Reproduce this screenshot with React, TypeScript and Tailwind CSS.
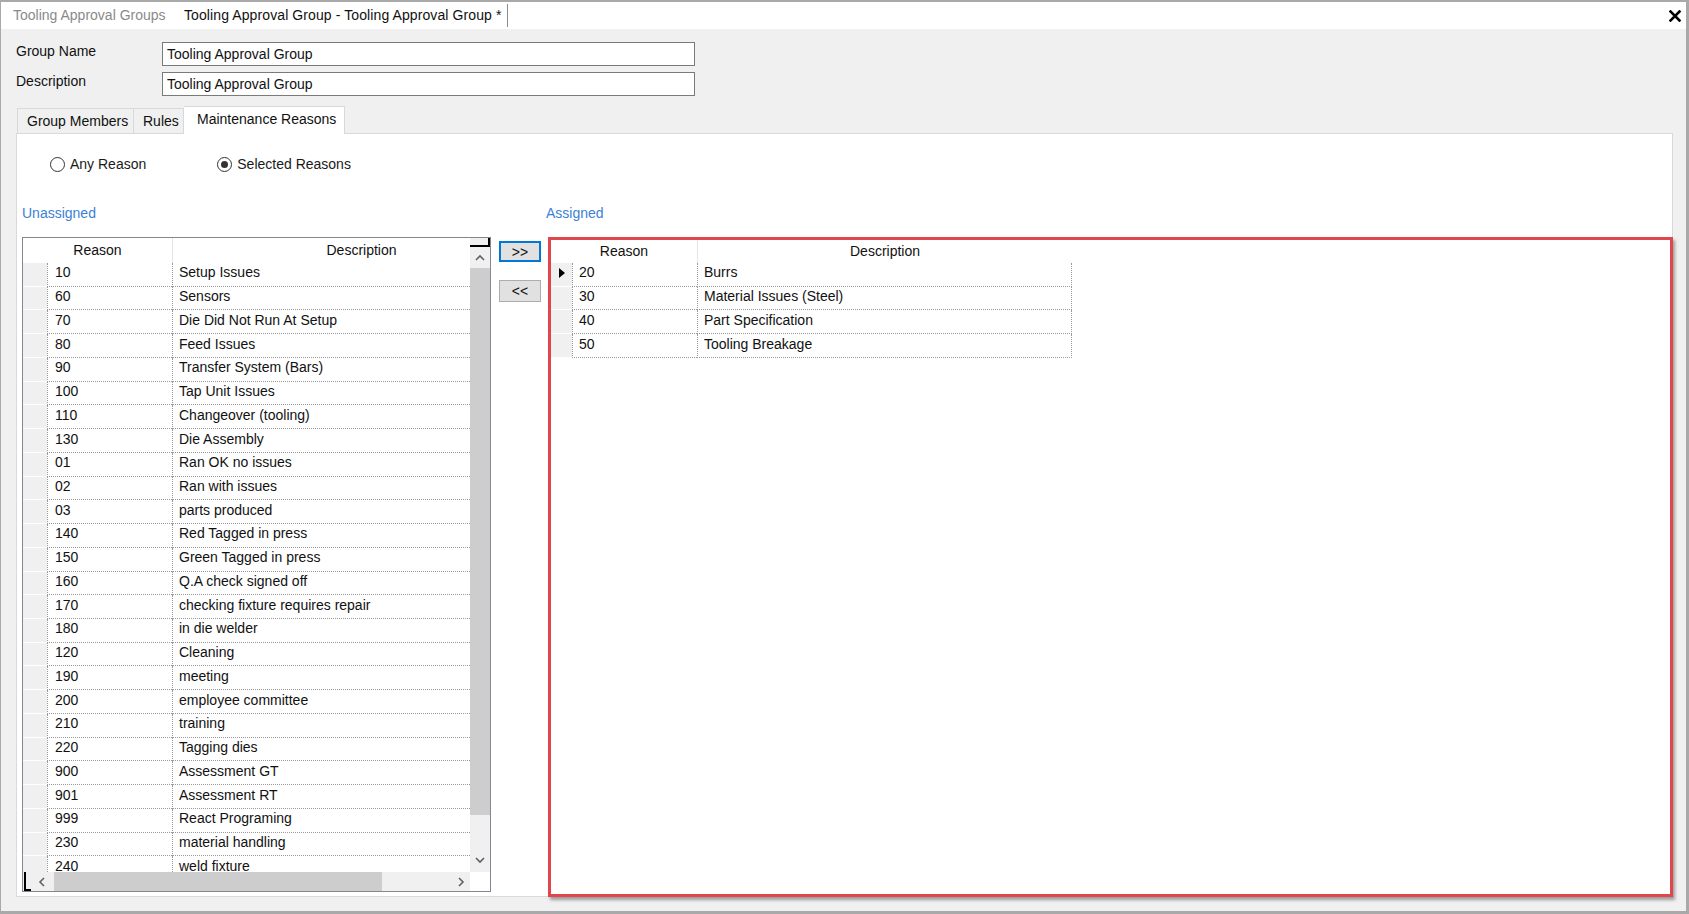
import React from "react";

const unassigned: [string, string][] = [
  ["10", "Setup Issues"],
  ["60", "Sensors"],
  ["70", "Die Did Not Run At Setup"],
  ["80", "Feed Issues"],
  ["90", "Transfer System (Bars)"],
  ["100", "Tap Unit Issues"],
  ["110", "Changeover (tooling)"],
  ["130", "Die Assembly"],
  ["01", "Ran OK no issues"],
  ["02", "Ran with issues"],
  ["03", "parts produced"],
  ["140", "Red Tagged in press"],
  ["150", "Green Tagged in press"],
  ["160", "Q.A check signed off"],
  ["170", "checking fixture requires repair"],
  ["180", "in die welder"],
  ["120", "Cleaning"],
  ["190", "meeting"],
  ["200", "employee committee"],
  ["210", "training"],
  ["220", "Tagging dies"],
  ["900", "Assessment GT"],
  ["901", "Assessment RT"],
  ["999", "React Programing"],
  ["230", "material handling"],
  ["240", "weld fixture"],
];

const assigned: [string, string][] = [
  ["20", "Burrs"],
  ["30", "Material Issues (Steel)"],
  ["40", "Part Specification"],
  ["50", "Tooling Breakage"],
];

function Chevron({ dir }: { dir: "up" | "down" | "left" | "right" }) {
  const d =
    dir === "up"
      ? "M1 7 L5 3 L9 7"
      : dir === "down"
      ? "M1 3 L5 7 L9 3"
      : dir === "left"
      ? "M7 1 L3 5 L7 9"
      : "M3 1 L7 5 L3 9";
  return (
    <svg width="10" height="10" viewBox="0 0 10 10">
      <path d={d} fill="none" stroke="#606060" strokeWidth="1.6" />
    </svg>
  );
}

function Radio({ checked, label }: { checked: boolean; label: string }) {
  return (
    <div className="flex items-center gap-[5px]">
      <div className="w-[15px] h-[15px] rounded-full border border-[#333333] bg-white flex items-center justify-center">
        {checked && <div className="w-[7px] h-[7px] rounded-full bg-[#333333]" />}
      </div>
      <span className="text-[#1a1a1a]">{label}</span>
    </div>
  );
}

export default function App() {
  return (
    <div className="w-[1689px] h-[914px] bg-[#f0f0f0] border-t-2 border-l border-r-[3px] border-b-[3px] border-[#a9a9a9] flex flex-col font-['Liberation_Sans',Arial,sans-serif] text-[14px] text-[#111] overflow-hidden">
      {/* document tabs */}
      <div className="h-[27px] bg-white flex items-center shrink-0">
        <div className="pl-[12px] w-[183px] text-[#8a8a8a] leading-[27px] whitespace-nowrap">Tooling Approval Groups</div>
        <div className="w-[323px] leading-[27px] whitespace-nowrap tracking-[0.1px]">Tooling Approval Group - Tooling Approval Group *</div>
        <div className="w-px h-[23px] bg-[#8c8c8c]" />
        <div className="flex-1" />
        <div className="mr-[5px]">
          <svg width="12" height="12" viewBox="0 0 12 12">
            <path d="M1.5 1.5 L10.5 10.5 M10.5 1.5 L1.5 10.5" stroke="#000" strokeWidth="2.6" strokeLinecap="square" />
          </svg>
        </div>
      </div>

      {/* form fields */}
      <div className="mt-[13px] ml-[15px] grid grid-cols-[146px_533px] gap-y-[6px] shrink-0">
        <div className="h-[24px] leading-[18px]">Group Name</div>
        <div className="h-[24px] border border-[#7a7a7a] bg-white px-[4px] leading-[22px]">Tooling Approval Group</div>
        <div className="h-[24px] leading-[18px]">Description</div>
        <div className="h-[24px] border border-[#7a7a7a] bg-white px-[4px] leading-[22px]">Tooling Approval Group</div>
      </div>

      {/* tab control */}
      <div className="mt-[10px] ml-[15px] mr-[13px] flex flex-col flex-1 min-h-0 mb-[14px]">
        <div className="flex items-end h-[27px] pl-[1px] relative z-10 shrink-0">
          <div className="w-[117px] h-[25px] border border-b-0 border-[#d9d9d9] bg-[#f0f0f0] flex items-center pl-[9px] pt-[1px]">Group Members</div>
          <div className="w-[50px] h-[25px] border border-b-0 border-l-0 border-[#d9d9d9] bg-[#f0f0f0] flex items-center pl-[9px] pt-[1px]">Rules</div>
          <div className="w-[161px] h-[28px] -mb-px border border-b-0 border-l-0 border-[#d9d9d9] bg-white flex items-center pl-[13px] pb-[2px]">Maintenance Reasons</div>
        </div>
        <div className="flex-1 min-h-0 border border-[#d9d9d9] bg-white flex flex-col">
          <div className="mt-[20px] h-[20px] flex items-center shrink-0">
            <div className="ml-[33px]">
              <Radio checked={false} label="Any Reason" />
            </div>
            <div className="ml-[71px]">
              <Radio checked={true} label="Selected Reasons" />
            </div>
          </div>

          <div className="mt-[30px] flex flex-1 min-h-0">
            {/* Unassigned */}
            <div className="ml-[5px] w-[469px] flex flex-col min-h-0 mb-[4px]">
              <div className="h-[18px] leading-[18px] text-[#3c7fd6] shrink-0">Unassigned</div>
              <div className="mt-[15px] flex-1 min-h-0 border border-[#828790] bg-white flex flex-col relative">
                <div className="flex flex-1 min-h-0">
                  <div className="flex-1 min-h-0 overflow-hidden">
                    <div className="flex h-[25px] items-center w-[527px]">
                      <div className="w-[149px] text-center">Reason</div>
                      <div className="w-[378px] h-full border-l border-[#e5e5e5] flex items-center justify-center">Description</div>
                    </div>
                    {unassigned.map(([r, d]) => (
                      <div key={r} className="flex h-[23.74px] w-[527px]">
                        <div className="w-[24px] bg-[#f0f0f0] border-b border-white" />
                        <div className="w-[125px] border-l border-b border-dotted border-[#9a9a9a] pl-[7px] flex items-center pb-[3px]">{r}</div>
                        <div className="w-[378px] border-l border-b border-dotted border-[#9a9a9a] pl-[6px] flex items-center pb-[3px] whitespace-nowrap">{d}</div>
                      </div>
                    ))}
                  </div>
                  <div className="w-[20px] bg-[#f0f0f0] flex flex-col min-h-0">
                    <div className="h-[30px] flex items-end justify-center pb-[5px] shrink-0">
                      <Chevron dir="up" />
                    </div>
                    <div className="h-[547px] bg-[#cdcdcd] shrink-0" />
                    <div className="flex-1 flex items-end justify-center pb-[7px]">
                      <Chevron dir="down" />
                    </div>
                  </div>
                </div>
                <div className="h-[19px] flex shrink-0">
                  <div className="flex-1 bg-[#f0f0f0] flex items-center">
                    <div className="w-[7px]" />
                    <div className="w-[24px] flex justify-center">
                      <Chevron dir="left" />
                    </div>
                    <div className="w-[328px] h-full bg-[#cdcdcd]" />
                    <div className="flex-1 flex justify-end pr-[4px]">
                      <Chevron dir="right" />
                    </div>
                  </div>
                  <div className="w-[20px] bg-white" />
                </div>
                {/* corner artifacts */}
                <div className="absolute top-0 right-0 w-[20px] h-[9px] border-b-2 border-r-2 border-black" />
                <div className="absolute bottom-0 left-0 w-[7px] h-[19px] border-l-2 border-b-2 border-black ml-[1px]" />
              </div>
            </div>

            {/* buttons */}
            <div className="ml-[8px] w-[42px] flex flex-col pt-[37px]">
              <div className="h-[21px] border-2 border-[#0078d7] bg-[#e1e1e1] flex items-center justify-center leading-none">&gt;&gt;</div>
              <div className="mt-[18px] h-[22px] border border-[#adadad] bg-[#e1e1e1] flex items-center justify-center leading-none">&lt;&lt;</div>
            </div>

            {/* Assigned */}
            <div className="ml-[7px] flex-1 flex flex-col min-h-0 -mr-px -mb-px">
              <div className="h-[18px] leading-[18px] text-[#3c7fd6] -ml-[2px] shrink-0">Assigned</div>
              <div className="mt-[15px] flex-1 min-h-0 border-[3px] border-[#e0464c] bg-white shadow-[2px_3px_3px_rgba(0,0,0,0.35)]">
                <div className="flex h-[23px] items-center">
                  <div className="w-[146px] text-center">Reason</div>
                  <div className="w-[375px] h-full border-l border-[#e5e5e5] flex items-center justify-center">Description</div>
                </div>
                {assigned.map(([r, d], i) => (
                  <div key={r} className="flex h-[23.74px]">
                    <div className="w-[21px] bg-[#f0f0f0] border-b border-white flex items-center justify-center pb-[2px]">
                      {i === 0 && (
                        <svg width="6" height="10" viewBox="0 0 6 10">
                          <path d="M0 0 L6 5 L0 10 Z" fill="#000" />
                        </svg>
                      )}
                    </div>
                    <div className="w-[125px] border-l border-b border-dotted border-[#9a9a9a] pl-[6px] flex items-center pb-[3px]">{r}</div>
                    <div className="w-[375px] border-l border-b border-r border-dotted border-[#9a9a9a] pl-[6px] flex items-center pb-[3px] whitespace-nowrap">{d}</div>
                  </div>
                ))}
              </div>
            </div>
          </div>
        </div>
      </div>
    </div>
  );
}
